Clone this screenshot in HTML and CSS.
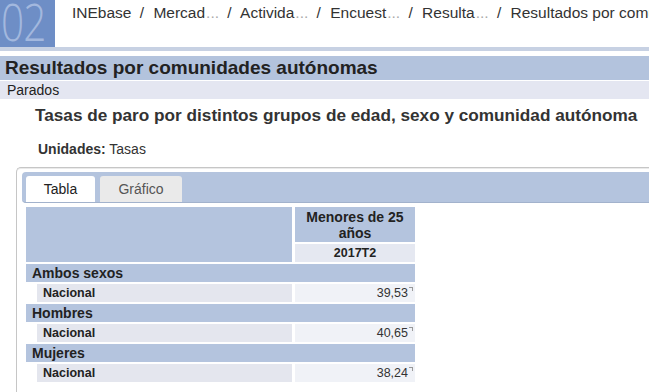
FILE: index.html
```html
<!DOCTYPE html>
<html lang="es">
<head>
  <meta charset="UTF-8">
  <title>Resultados por comunidades autónomas</title>
  <link rel="stylesheet" href="styles.css">
</head>
<body>
  <!-- Cabecera -->
  <div class="header">
    <div class="logo"><span>02</span></div>
    <div class="crumbs">
      <span>INEbase</span>
      <span class="sep">/</span>
      <span>Mercad<i>...</i></span>
      <span class="sep">/</span>
      <span>Activida<i>...</i></span>
      <span class="sep">/</span>
      <span>Encuest<i>...</i></span>
      <span class="sep">/</span>
      <span>Resulta<i>...</i></span>
      <span class="sep">/</span>
      <span>Resultados por comunidades autónomas</span>
    </div>
  </div>

  <h1 class="title">Resultados por comunidades autónomas</h1>
  <div class="subtitle">Parados</div>

  <h2 class="table-title">Tasas de paro por distintos grupos de edad, sexo y comunidad autónoma</h2>
  <p class="units"><b>Unidades:</b> Tasas</p>

  <!-- Panel con pestañas -->
  <div class="panel">
    <div class="tabs">
      <div class="tab active">Tabla</div>
      <div class="tab">Gráfico</div>
    </div>

    <div class="grid">
      <div class="corner"></div>
      <div class="col-head">Menores de 25 años</div>
      <div class="period">2017T2</div>

      <div class="group">Ambos sexos</div>
      <div class="label">Nacional</div>
      <div class="value">39,53<span class="mark"></span></div>

      <div class="group">Hombres</div>
      <div class="label">Nacional</div>
      <div class="value">40,65<span class="mark"></span></div>

      <div class="group">Mujeres</div>
      <div class="label">Nacional</div>
      <div class="value">38,24<span class="mark"></span></div>
    </div>
  </div>
</body>
</html>
```

FILE: styles.css
```css
/* Cuerpo */
body {
  font-family: "Liberation Sans", Arial, sans-serif;
  margin: 0;
  padding: 0;
  background: #fff;
  color: #222;
  overflow: hidden;
}

/* Cabecera */
.header {
  display: flex;
  height: 47px;
  border-bottom: 4px solid #c7d1e3;
  margin-bottom: 5px;
}

.logo {
  flex: none;
  width: 55px;
  height: 47px;
  background: #6e8ec6;
  color: #a3b8de;
  font-family: "Open Sans", sans-serif;
  font-weight: 300;
  font-size: 52px;
  line-height: 42px;
  overflow: hidden;
}

.logo span {
  display: inline-block;
  transform: scaleX(0.78);
  transform-origin: left top;
  letter-spacing: -1px;
  margin-left: 1px;
}

.crumbs {
  padding: 4px 0 0 17px;
  font-size: 15.5px;
  color: #333;
  white-space: nowrap;
  overflow: hidden;
}

.crumbs span {
  margin-right: 2px;
}

.crumbs .sep {
  margin: 0 5px 0 2px;
}

.crumbs i {
  font-style: normal;
  color: #aaa;
  margin-left: 1px;
}

/* Títulos */
.title {
  margin: 0;
  height: 24px;
  padding-left: 5px;
  background: #b3c3dd;
  font-size: 19px;
  line-height: 24px;
  color: #222;
}

.subtitle {
  height: 18px;
  padding-left: 7px;
  margin-top: 1px;
  background: #e4e6f1;
  font-size: 14px;
  line-height: 18px;
  color: #222;
}

.table-title {
  margin: 5px 0 0 35px;
  font-size: 17.2px;
  line-height: 22px;
  color: #333;
  white-space: nowrap;
}

.units {
  margin: 14px 0 0 38px;
  font-size: 14px;
  line-height: 18px;
  color: #333;
}

/* Panel */
.panel {
  margin: 9px 0 0 16px;
  padding: 4px 0 20px 5px;
  border: 1px solid #c6c6c6;
  border-right: none;
  border-radius: 5px 0 0 5px;
  box-shadow: inset 0 1px 0 #eaeaea;
}

.tabs {
  display: flex;
  gap: 5px;
  height: 26px;
  padding: 4px 0 0 4px;
  background: #b4c4de;
  border-bottom: 1px solid #a2b2cc;
  border-radius: 4px 0 0 4px;
}

.tab {
  width: 69px;
  height: 26px;
  text-align: center;
  font-size: 14px;
  line-height: 27px;
  color: #555;
  background: #eaeaea;
  border-radius: 3px 3px 0 0;
}

.tab.active {
  background: #fff;
  color: #222;
}

.tab + .tab {
  width: 82px;
}

/* Tabla */
.grid {
  display: grid;
  grid-template-columns: 266px 120px;
  grid-template-rows: 35px 18px repeat(6, 18px);
  gap: 2px 3px;
  margin: 4px 0 0 4px;
}

.corner {
  grid-row: span 2;
  background: #b4c4de;
}

.col-head {
  background: #b4c4de;
  font-weight: bold;
  font-size: 14px;
  line-height: 16px;
  text-align: center;
  padding-top: 2px;
  color: #222;
}

.period {
  grid-column: 2;
  background: #e5e8f1;
  font-weight: bold;
  font-size: 12.5px;
  line-height: 18px;
  text-align: center;
  color: #222;
}

.group {
  grid-column: span 2;
  background: #b4c4de;
  font-weight: bold;
  font-size: 14px;
  line-height: 18px;
  padding-left: 6px;
  color: #222;
}

.label {
  margin-left: 11px;
  padding-left: 6px;
  background: #e4e6ee;
  font-weight: bold;
  font-size: 12.5px;
  line-height: 18px;
  color: #222;
}

.value {
  position: relative;
  background: #f0f2f7;
  font-size: 12.5px;
  line-height: 18px;
  text-align: right;
  padding-right: 7px;
  color: #333;
}

.mark {
  position: absolute;
  top: 3px;
  right: 2px;
  width: 3px;
  height: 3px;
  border-top: 1px solid #999;
  border-right: 1px solid #999;
}
```
